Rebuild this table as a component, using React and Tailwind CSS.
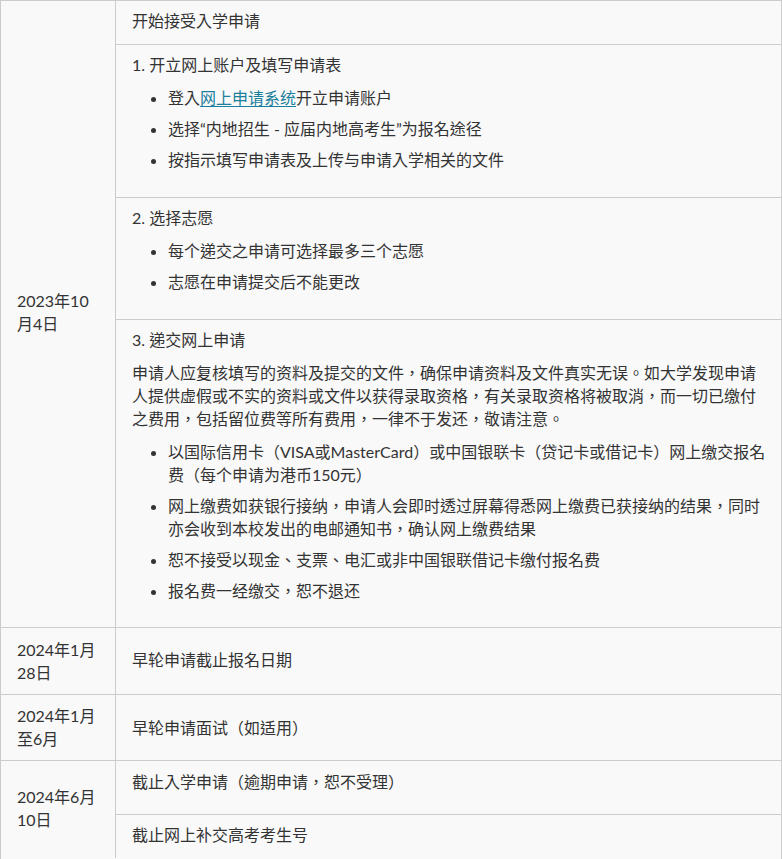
import React from "react";

const Link = ({ children }) => (
  <a href="#" className="text-[#1a7f9c] underline underline-offset-2 decoration-1">
    {children}
  </a>
);

const Li = ({ children, nowrap }) => (
  <li className={nowrap ? "mb-2 whitespace-nowrap" : "mb-2"}>{children}</li>
);

export default function App() {
  return (
    <div
      className="w-[782px] h-[859px] overflow-hidden bg-[#f9f9f9] text-[#333333] text-[16px] leading-[23px] border-l border-r border-[#cccccc]"
      style={{ fontFamily: 'Lato, "Noto Sans CJK TC", sans-serif' }}
    >
      {/* Row 1 */}
      <div className="flex border-t border-[#cccccc]">
        <div className="w-[115px] shrink-0 border-r border-[#cccccc] px-4 pb-1 flex items-center">
          <p>2023年10月4日</p>
        </div>
        <div className="flex-1 flex flex-col">
          <div className="px-4 pt-2 pb-3">
            <p>开始接受入学申请</p>
          </div>
          <div className="border-t border-[#cccccc] px-4 pt-2 pb-2">
            <p className="mb-[10px]">1. 开立网上账户及填写申请表</p>
            <ul className="list-disc pl-9 mb-[18px]">
              <Li>
                登入<Link>网上申请系统</Link>开立申请账户
              </Li>
              <Li>选择“内地招生 - 应届内地高考生”为报名途径</Li>
              <Li>按指示填写申请表及上传与申请入学相关的文件</Li>
            </ul>
          </div>
          <div className="border-t border-[#cccccc] px-4 pt-2 pb-2">
            <p className="mb-[10px]">2. 选择志愿</p>
            <ul className="list-disc pl-9 mb-[18px]">
              <Li>每个递交之申请可选择最多三个志愿</Li>
              <Li>志愿在申请提交后不能更改</Li>
            </ul>
          </div>
          <div className="border-t border-[#cccccc] px-4 pt-2 pb-[7px]">
            <p className="mb-[10px]">3. 递交网上申请</p>
            <p className="mb-[10px]">
              申请人应复核填写的资料及提交的文件，确保申请资料及文件真实无误。如大学发现申请人提供虚假或不实的资料或文件以获得录取资格，有关录取资格将被取消，而一切已缴付之费用，包括留位费等所有费用，一律不于发还，敬请注意。
            </p>
            <ul className="list-disc pl-9 mb-[18px]">
              <Li nowrap>
                以国际信用卡（VISA或MasterCard）或中国银联卡（贷记卡或借记卡）网上缴交报名
                <br />
                费（每个申请为港币150元）
              </Li>
              <Li nowrap>
                网上缴费如获银行接纳，申请人会即时透过屏幕得悉网上缴费已获接纳的结果，同时
                <br />
                亦会收到本校发出的电邮通知书，确认网上缴费结果
              </Li>
              <Li>恕不接受以现金、支票、电汇或非中国银联借记卡缴付报名费</Li>
              <Li>报名费一经缴交，恕不退还</Li>
            </ul>
          </div>
        </div>
      </div>

      {/* Row 2 */}
      <div className="flex border-t border-[#cccccc]">
        <div className="w-[115px] shrink-0 border-r border-[#cccccc] px-4 pt-[10px] pb-[10px]">
          <p>2024年1月28日</p>
        </div>
        <div className="flex-1 px-4 pb-1 flex items-center">
          <p>早轮申请截止报名日期</p>
        </div>
      </div>

      {/* Row 3 */}
      <div className="flex border-t border-[#cccccc]">
        <div className="w-[115px] shrink-0 border-r border-[#cccccc] px-4 pt-[9px] pb-[10px]">
          <p>2024年1月至6月</p>
        </div>
        <div className="flex-1 px-4 flex items-center">
          <p>早轮申请面试（如适用）</p>
        </div>
      </div>

      {/* Row 4 */}
      <div className="flex border-t border-[#cccccc]">
        <div className="w-[115px] shrink-0 border-r border-[#cccccc] px-4 pb-[3px] flex items-center">
          <p>2024年6月10日</p>
        </div>
        <div className="flex-1 flex flex-col">
          <div className="px-4 pt-[9px] pb-[21px]">
            <p>截止入学申请（逾期申请，恕不受理）</p>
          </div>
          <div className="border-t border-[#cccccc] px-4 pt-2 pb-3">
            <p>截止网上补交高考考生号</p>
          </div>
        </div>
      </div>
    </div>
  );
}
